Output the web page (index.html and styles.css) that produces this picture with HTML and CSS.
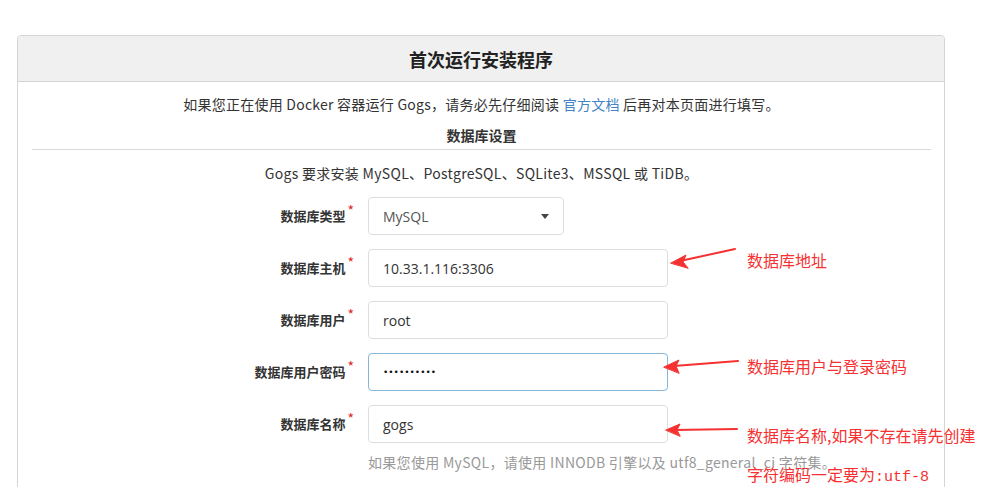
FILE: index.html
```html
<!DOCTYPE html>
<html lang="zh-CN">
<head>
<meta charset="utf-8">
<title>首次运行安装程序</title>
<link rel="stylesheet" href="styles.css">
</head>
<body>
<div class="page">
  <div class="card">
    <h3 class="card-header">首次运行安装程序</h3>
    <div class="card-body">
      <p class="notice">如果您正在使用 Docker 容器运行 Gogs，请务必先仔细阅读 <a href="#">官方文档</a> 后再对本页面进行填写。</p>
      <h4 class="section-title">数据库设置</h4>
      <p class="intro">Gogs 要求安装 MySQL、PostgreSQL、SQLite3、MSSQL 或 TiDB。</p>
      <div class="form">
        <div class="row">
          <label class="label">数据库类型<span class="req">*</span></label>
          <div class="select"><span>MySQL</span><i class="caret"></i></div>
        </div>
        <div class="row">
          <label class="label">数据库主机<span class="req">*</span></label>
          <input class="input" type="text" value="10.33.1.116:3306">
        </div>
        <div class="row">
          <label class="label">数据库用户<span class="req">*</span></label>
          <input class="input" type="text" value="root">
        </div>
        <div class="row">
          <label class="label">数据库用户密码<span class="req">*</span></label>
          <div class="input focus"><span class="dots">••••••••••</span></div>
        </div>
        <div class="row">
          <label class="label">数据库名称<span class="req">*</span></label>
          <input class="input" type="text" value="gogs">
        </div>
        <div class="row help-row">
          <span class="help">如果您使用 MySQL，请使用 INNODB 引擎以及 utf8_general_ci 字符集。</span>
        </div>
      </div>
    </div>
  </div>

  <svg class="arrows" width="983" height="487" viewBox="0 0 983 487">
    <g fill="#f53131" stroke="#f53131" stroke-linecap="round">
      <line x1="735" y1="249" x2="680" y2="261" stroke-width="2"/>
      <polygon points="671,263 686,255 683,262 688,268" stroke-width="1"/>
      <line x1="738" y1="361" x2="674" y2="366" stroke-width="2"/>
      <polygon points="664,367 679,360 676,366 679,373" stroke-width="1"/>
      <line x1="737" y1="429" x2="674" y2="430" stroke-width="2"/>
      <polygon points="666,430 680,424 677,430 680,436" stroke-width="1"/>
    </g>
  </svg>
  <div class="note n1">数据库地址</div>
  <div class="note n2">数据库用户与登录密码</div>
  <div class="note n3">数据库名称,如果不存在请先创建</div>
  <div class="note n4">字符编码一定要为<span class="mono">:utf-8</span></div>
</div>
</body>
</html>
```

FILE: styles.css
```css
* { box-sizing: border-box; }
html, body { margin: 0; padding: 0; background: #fff; }
body {
  font-family: "Open Sans", "Noto Sans CJK SC", sans-serif;
  color: #333;
  font-size: 14px;
  overflow: hidden;
  height: 487px;
}
.page {
  position: relative;
  height: 487px;
  padding: 35px 38px 0 17px;
}
.card {
  border: 1px solid #d4d4d5;
  border-radius: 4px 4px 0 0;
  height: 470px;
  width: 928px;
}
.card-header {
  margin: 0;
  height: 46px;
  background: #f0f0f0;
  border-bottom: 1px solid #d4d4d5;
  border-radius: 4px 4px 0 0;
  font-family: "Noto Sans CJK SC", sans-serif;
  font-size: 18px;
  font-weight: 700;
  color: #222;
  display: flex;
  align-items: center;
  justify-content: center;
}
.card-body { padding: 12px 13px 0 14px; }
.notice {
  margin: 0;
  text-align: center;
  font-size: 14px;
  letter-spacing: 0.25px;
  line-height: 20px;
  color: #333;
  font-family: "Noto Sans CJK SC", sans-serif;
}
.notice a { color: #4183c4; text-decoration: none; }
.section-title {
  margin: 11px 0 0;
  font-family: "Noto Sans CJK SC", sans-serif;
  font-size: 14px;
  font-weight: 700;
  line-height: 20px;
  text-align: center;
  color: #333;
  padding-bottom: 4px;
  border-bottom: 1px solid #d9d9d9;
}
.intro {
  margin: 13px 0 0;
  text-align: center;
  font-size: 14px;
  letter-spacing: 0.3px;
  line-height: 20px;
  font-family: "Noto Sans CJK SC", sans-serif;
}
.form {
  margin-top: 14px;
  display: flex;
  flex-direction: column;
  gap: 14px;
}
.row {
  display: grid;
  grid-template-columns: 322px 300px;
  column-gap: 14px;
  align-items: center;
}
.label {
  font-family: "Noto Sans CJK SC", sans-serif;
  font-size: 13px;
  font-weight: 700;
  color: #333;
  text-align: right;
  position: relative;
  top: -1px;
}
.req {
  color: #db2828;
  font-weight: 400;
  font-size: 14px;
  margin-left: 2px;
  position: relative;
  top: -5px;
}
.input, .select {
  height: 38px;
  border: 1px solid #dedede;
  border-radius: 4px;
  padding: 0 14px;
  font-family: "Open Sans", "Noto Sans CJK SC", sans-serif;
  font-size: 14px;
  color: #333;
  background: #fff;
  width: 300px;
  outline: none;
  display: flex;
  align-items: center;
}
.select {
  width: 196px;
  justify-content: space-between;
  color: #555;
}
.caret {
  width: 0; height: 0;
  border-left: 4px solid transparent;
  border-right: 4px solid transparent;
  border-top: 5px solid #444;
}
.focus { border-color: #85b7d9; }
.dots {
  font-family: "DejaVu Sans", sans-serif;
  font-size: 9px;
  color: #111;
}
.help-row { margin-top: -4px; }
.help {
  grid-column: 2;
  white-space: nowrap;
  font-family: "Noto Sans CJK SC", sans-serif;
  font-size: 14px;
  letter-spacing: 0.3px;
  color: #999;
  line-height: 18px;
}
.arrows { position: absolute; left: 0; top: 0; pointer-events: none; }
.note {
  position: absolute;
  left: 747px;
  color: #f53131;
  font-family: "Noto Sans CJK SC", sans-serif;
  font-size: 16px;
  line-height: 20px;
  white-space: nowrap;
}
.n1 { top: 250px; }
.n2 { top: 356px; }
.n3 { top: 425px; }
.n4 { top: 464px; }
.mono { font-family: "Liberation Mono", monospace; font-size: 15px; }
```
